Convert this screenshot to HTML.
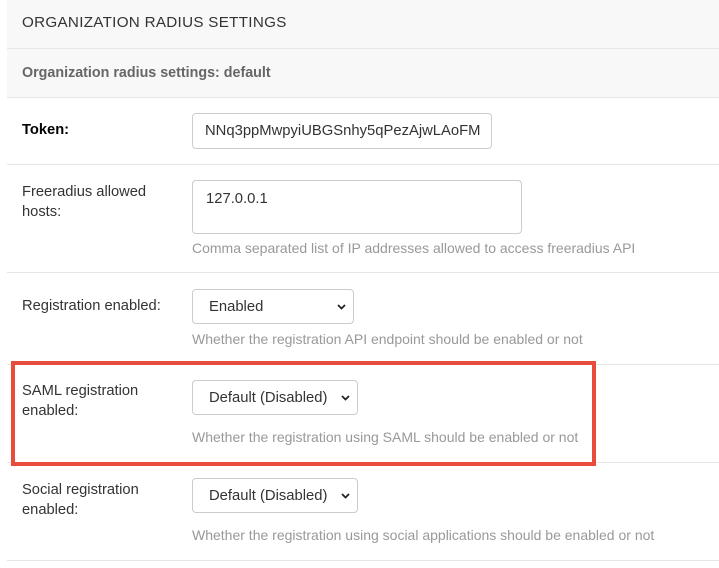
<!DOCTYPE html>
<html><head><style>
body{margin:0;width:719px;height:568px;background:#fff;font-family:"Liberation Sans",sans-serif;position:relative;overflow:hidden;color:#333}
div,span,svg{position:absolute;box-sizing:border-box}
.hl{left:7px;width:712px;height:1px;background:#e6e6e6}
.lbl{left:22px;font-size:14.7px;color:#333;line-height:20px}
.box{border:1px solid #ccc;border-radius:4px;background:#fff;font-size:14.8px;color:#333;padding-left:16px;line-height:34px;white-space:nowrap}
.help{left:192px;font-size:14px;color:#999;white-space:nowrap}
.chev{right:7px;top:14px}
</style></head><body>
<div style="left:7px;top:0;width:712px;height:48px;background:#f8f8f8"></div>
<div class="hl" style="top:48px"></div>
<div style="left:22px;top:14px;font-size:15.2px;letter-spacing:0.3px;color:#333">ORGANIZATION RADIUS SETTINGS</div>
<div style="left:7px;top:49px;width:712px;height:48px;background:#f8f8f8"></div>
<div class="hl" style="top:97px"></div>
<div style="left:22px;top:65px;font-size:14.3px;font-weight:bold;color:#666">Organization radius settings: default</div>

<div class="lbl" style="top:120px;font-weight:bold;color:#000">Token:</div>
<div class="box" style="left:192px;top:113px;width:300px;height:36px;padding-left:12px;line-height:35px">NNq3ppMwpyiUBGSnhy5qPezAjwLAoFM</div>
<div class="hl" style="top:164px"></div>

<div class="lbl" style="top:182px">Freeradius allowed<br>hosts:</div>
<div class="box" style="left:192px;top:180px;width:330px;height:54px;line-height:20px;padding-top:8px;padding-left:13px">127.0.0.1</div>
<div class="help" style="top:240px">Comma separated list of IP addresses allowed to access freeradius API</div>
<div class="hl" style="top:272px"></div>

<div class="lbl" style="top:296px">Registration enabled:</div>
<div class="box" style="left:192px;top:289px;width:162px;height:35px">Enabled<svg class="chev" width="9" height="6" viewBox="0 0 9 6"><path d="M1 1L4.5 4.5L8 1" stroke="#222" stroke-width="1.8" fill="none"/></svg></div>
<div class="help" style="top:331px">Whether the registration API endpoint should be enabled or not</div>
<div class="hl" style="top:364px"></div>

<div class="lbl" style="top:381px">SAML registration<br>enabled:</div>
<div class="box" style="left:192px;top:380px;width:166px;height:35px">Default (Disabled)<svg class="chev" width="9" height="6" viewBox="0 0 9 6"><path d="M1 1L4.5 4.5L8 1" stroke="#222" stroke-width="1.8" fill="none"/></svg></div>
<div class="help" style="top:429px">Whether the registration using SAML should be enabled or not</div>
<div class="hl" style="top:462px"></div>
<div style="left:11px;top:361px;width:585px;height:105px;border:4px solid #e74c3c"></div>

<div class="lbl" style="top:480px">Social registration<br>enabled:</div>
<div class="box" style="left:192px;top:478px;width:166px;height:35px">Default (Disabled)<svg class="chev" width="9" height="6" viewBox="0 0 9 6"><path d="M1 1L4.5 4.5L8 1" stroke="#222" stroke-width="1.8" fill="none"/></svg></div>
<div class="help" style="top:527px">Whether the registration using social applications should be enabled or not</div>
<div class="hl" style="top:560px"></div>
</body></html>
